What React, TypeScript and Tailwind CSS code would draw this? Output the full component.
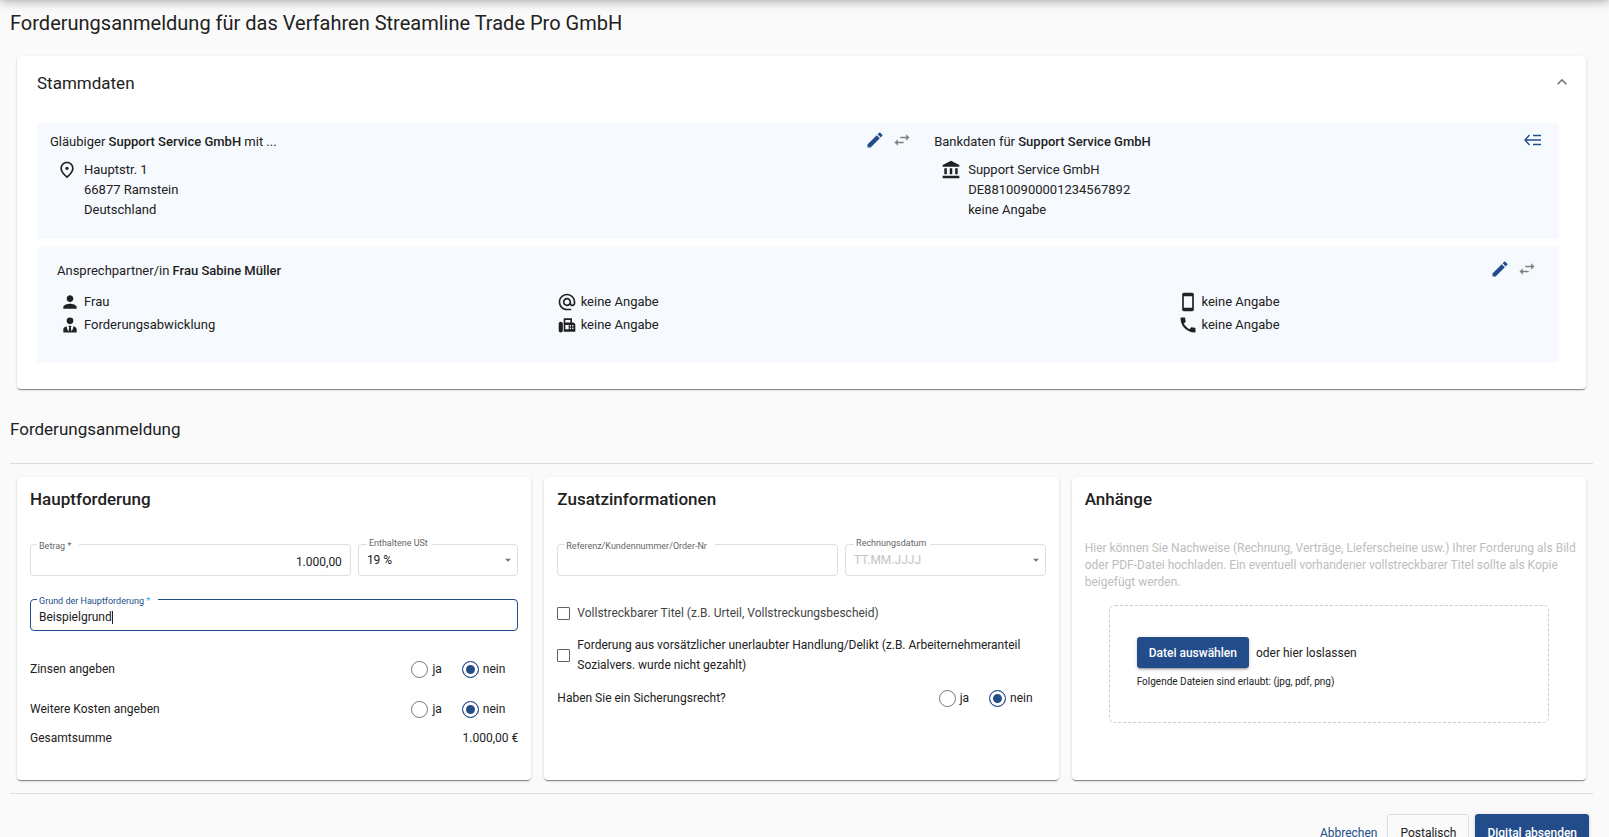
import { ReactNode } from "react";
import {
  MdAccountBalance,
  MdAlternateEmail,
  MdArrowDropDown,
  MdCall,
  MdEdit,
  MdExpandLess,
  MdFax,
  MdOutlinePlace,
  MdPerson,
  MdStayCurrentPortrait,
} from "react-icons/md";

const card =
  "bg-white rounded shadow-[0_2px_1px_-1px_rgba(0,0,0,0.3),0_1px_1px_0_rgba(0,0,0,0.16),0_1px_3px_0_rgba(0,0,0,0.14)]";
const primaryButton =
  "rounded-[3px] bg-[#224d8a] px-3 font-medium text-white shadow-[0_3px_1px_-2px_rgba(0,0,0,0.2),0_2px_2px_0_rgba(0,0,0,0.14),0_1px_5px_0_rgba(0,0,0,0.12)]";

function TieIcon() {
  return (
    <svg viewBox="0 0 24 24" className="size-5" fill="currentColor">
      <path d="M12 3a4 4 0 1 1 0 8 4 4 0 0 1 0-8m4 10.54c0 1.06-.28 3.53-2.19 6.29L13 15l.94-1.88c-.62-.07-1.27-.12-1.94-.12s-1.32.05-1.94.12L11 15l-.81 4.83C8.28 17.07 8 14.6 8 13.54c-2.39.7-4 1.96-4 3.46v4h16v-4c0-1.5-1.6-2.76-4-3.46" />
    </svg>
  );
}

function SwapIcon() {
  return (
    <svg viewBox="0 0 24 24" className="size-5" fill="currentColor">
      <path d="m21 9-4-4v3h-7v2h7v3zM7 11l-4 4 4 4v-3h7v-2H7z" />
    </svg>
  );
}

function MenuOpenIcon() {
  return (
    <svg
      viewBox="0 0 20 20"
      className="size-5"
      fill="none"
      stroke="currentColor"
      strokeWidth="1.4"
    >
      <path d="M10 5.500h8M2 10h16M10 14.500h8M6.500 5 2 10l4.500 5" />
    </svg>
  );
}

function EditActions() {
  return (
    <div className="flex gap-[7px]">
      <button type="button" aria-label="Bearbeiten" className="text-[#224d8a]">
        <MdEdit className="size-5" />
      </button>
      <button type="button" aria-label="Wechseln" className="text-[#808080]">
        <SwapIcon />
      </button>
    </div>
  );
}

function Contact({ icon, children }: { icon: ReactNode; children: ReactNode }) {
  return (
    <li className="flex h-[23px] items-center gap-1">
      {icon}
      <span>{children}</span>
    </li>
  );
}

function YesNo({ name, label }: { name: string; label: string }) {
  const radio =
    "size-[17px] appearance-none rounded-full border border-[#757575] checked:border-[#224d8a] checked:bg-[#224d8a] checked:shadow-[inset_0_0_0_3px_white]";
  return (
    <fieldset className="flex items-center">
      <legend className="float-left flex-1">{label}</legend>
      <label className="flex items-center gap-1">
        <input type="radio" name={name} className={radio} />
        ja
      </label>
      <label className="ml-5 mr-[13px] flex items-center gap-1">
        <input type="radio" name={name} defaultChecked className={radio} />
        nein
      </label>
    </fieldset>
  );
}

function Field({
  id,
  label,
  className,
  active,
  dropdown,
  children,
}: {
  id: string;
  label: ReactNode;
  className?: string;
  active?: boolean;
  dropdown?: boolean;
  children: ReactNode;
}) {
  return (
    <div
      className={`relative flex h-8 items-center rounded border px-2 ${
        active ? "border-[#224d8a]" : "border-[#dedede]"
      } ${className ?? ""}`}
    >
      <label
        htmlFor={id}
        className={`absolute bg-white pl-0.5 text-[9px] leading-3 ${
          dropdown ? "-top-2 left-2 px-1" : "-top-1.5 left-1.5 pr-2 pt-px"
        } ${active ? "text-[#224d8a]" : "text-[#666]"}`}
      >
        {label}
      </label>
      {children}
      {dropdown && (
        <MdArrowDropDown className="pointer-events-none -mr-1.5 size-3.5 shrink-0 text-[#757575]" />
      )}
    </div>
  );
}

function Card({ title, children }: { title: string; children: ReactNode }) {
  return (
    <section className={`${card} px-[13px] pb-8 pt-[11px]`}>
      <h3 className="mb-[30px] text-[17px] font-medium leading-[22px]">{title}</h3>
      {children}
    </section>
  );
}

export default function App() {
  return (
    <div className="h-screen overflow-hidden bg-[#fafafa] font-['Roboto',sans-serif] text-[13px] leading-5 text-[#212121]">
      <header className="-mt-16 h-16 shadow-[0_1px_10px_0_rgba(0,0,0,0.36)]" />
      <main className="pl-2.5 pr-4 pt-[11px]">
        <h1 className="text-xl leading-6">
          Forderungsanmeldung für das Verfahren Streamline Trade Pro GmbH
        </h1>

        <section className={`${card} mx-[7px] mt-[21px] px-5 pb-[26px] pt-4`}>
          <div className="flex items-start justify-between">
            <h2 className="text-[17px] leading-[22px]">Stammdaten</h2>
            <button type="button" aria-label="Einklappen" className="-mr-1.5 text-[#757575]">
              <MdExpandLess className="size-5" />
            </button>
          </div>

          <div className="mr-[7px] mt-[29px] grid grid-cols-[7fr_5fr] rounded bg-[#f6f9fe] px-1 pb-[19px] pt-[7px]">
            <div className="pl-[9px] pr-3">
              <div className="flex h-6 items-start justify-between">
                <p className="leading-6">
                  Gläubiger <b className="font-medium">Support Service GmbH</b> mit ...
                </p>
                <EditActions />
              </div>
              <div className="mt-1.5 flex gap-[7px] pl-[7px]">
                <MdOutlinePlace className="size-5" />
                <address className="not-italic">
                  Hauptstr. 1<br />
                  66877 Ramstein
                  <br />
                  Deutschland
                </address>
              </div>
            </div>
            <div className="pl-2.5 pr-3">
              <div className="flex h-6 items-start justify-between">
                <p className="leading-6">
                  Bankdaten für <b className="font-medium">Support Service GmbH</b>
                </p>
                <button type="button" aria-label="Menü" className="text-[#224d8a]">
                  <MenuOpenIcon />
                </button>
              </div>
              <div className="mt-1.5 flex gap-[7px] pl-[7px]">
                <MdAccountBalance className="size-5" />
                <p>
                  Support Service GmbH
                  <br />
                  DE88100900001234567892
                  <br />
                  keine Angabe
                </p>
              </div>
            </div>
          </div>

          <div className="mr-[7px] mt-[7px] rounded bg-[#f6f9fe] px-4 pb-[27px] pt-[13px]">
            <div className="flex h-6 items-start justify-between pl-1 pr-1.5">
              <p className="leading-6">
                Ansprechpartner/in <b className="font-medium">Frau Sabine Müller</b>
              </p>
              <EditActions />
            </div>
            <div className="mt-[7px] grid grid-cols-[4fr_5fr_3fr]">
              <ul className="pl-[7px]">
                <Contact icon={<MdPerson className="size-5" />}>Frau</Contact>
                <Contact icon={<TieIcon />}>Forderungsabwicklung</Contact>
              </ul>
              <ul className="pl-[7px]">
                <Contact icon={<MdAlternateEmail className="size-5" />}>keine Angabe</Contact>
                <Contact icon={<MdFax className="size-5" />}>keine Angabe</Contact>
              </ul>
              <ul className="pl-[7px]">
                <Contact icon={<MdStayCurrentPortrait className="size-5" />}>
                  keine Angabe
                </Contact>
                <Contact icon={<MdCall className="size-5" />}>keine Angabe</Contact>
              </ul>
            </div>
          </div>
        </section>

        <h2 className="mt-7 text-[17px] leading-6">Forderungsanmeldung</h2>

        <div className="mt-[22px] grid grid-cols-3 gap-[13px] border-y border-[#dcdcdc] px-[7px] py-[13px] text-xs leading-5">
          <Card title="Hauptforderung">
            <div className="mt-[34px] grid grid-cols-[2fr_1fr] gap-[7px]">
              <Field id="betrag" label="Betrag *">
                <input
                  id="betrag"
                  defaultValue="1.000,00"
                  className="w-full pt-1 text-right outline-none"
                />
              </Field>
              <Field id="ust" label="Enthaltene USt" dropdown>
                <select id="ust" className="w-full appearance-none outline-none">
                  <option>19 %</option>
                </select>
              </Field>
            </div>
            <Field
              id="grund"
              label={
                <>
                  Grund der Hauptforderung <span className="text-[#2fa4f5]">*</span>
                </>
              }
              className="mt-[23px]"
              active
            >
              <input
                id="grund"
                defaultValue="Beispielgrund"
                className="field-sizing-content pt-1 outline-none"
              />
              <span className="mt-1 h-[13px] w-px bg-[#212121]" />
            </Field>
            <div className="mt-7">
              <YesNo name="zinsen" label="Zinsen angeben" />
            </div>
            <div className="mt-5">
              <YesNo name="kosten" label="Weitere Kosten angeben" />
            </div>
            <p className="mt-[9px] flex justify-between">
              <span>Gesamtsumme</span>
              <span>1.000,00 €</span>
            </p>
          </Card>

          <Card title="Zusatzinformationen">
            <div className="mt-[34px] grid grid-cols-[7fr_5fr] gap-[7px]">
              <Field id="referenz" label="Referenz/Kundennummer/Order-Nr">
                <input id="referenz" className="w-full pt-1 outline-none" />
              </Field>
              <Field id="datum" label="Rechnungsdatum" dropdown>
                <input
                  id="datum"
                  placeholder="TT.MM.JJJJ"
                  className="w-full outline-none placeholder:text-[#c4c4c4]"
                />
              </Field>
            </div>
            <label className="mt-[27px] flex items-center gap-[7px] text-[#444]">
              <input
                type="checkbox"
                className="size-[13px] shrink-0 appearance-none rounded-[1px] border border-[#616161]"
              />
              Vollstreckbarer Titel (z.B. Urteil, Vollstreckungsbescheid)
            </label>
            <label className="mt-3 flex items-center gap-[7px]">
              <input
                type="checkbox"
                className="size-[13px] shrink-0 appearance-none rounded-[1px] border border-[#616161]"
              />
              Forderung aus vorsätzlicher unerlaubter Handlung/Delikt (z.B. Arbeiternehmeranteil
              Sozialvers. wurde nicht gezahlt)
            </label>
            <div className="mt-[13px]">
              <YesNo name="recht" label="Haben Sie ein Sicherungsrecht?" />
            </div>
          </Card>

          <Card title="Anhänge">
            <p className="-mr-2.5 leading-[17px] text-[#bdbdbd]">
              Hier können Sie Nachweise (Rechnung, Verträge, Lieferscheine usw.) Ihrer Forderung als
              Bild oder PDF-Datei hochladen. Ein eventuell vorhandener vollstreckbarer Titel sollte
              als Kopie beigefügt werden.
            </p>
            <div className="mx-6 mt-3.5 rounded-md border border-dashed border-[#ccc] px-[27px] pb-8 pt-[31px]">
              <div className="flex items-center gap-[7px]">
                <button type="button" className={`${primaryButton} h-[31px]`}>
                  Datei auswählen
                </button>
                <span>oder hier loslassen</span>
              </div>
              <p className="mt-1.5 text-[10px] leading-4">
                Folgende Dateien sind erlaubt: (jpg, pdf, png)
              </p>
            </div>
          </Card>
        </div>

        <div className="mt-5 flex justify-end gap-1.5 pr-1 text-xs">
          <button type="button" className="h-[37px] px-1 text-[#224d8a]">
            Abbrechen
          </button>
          <button type="button" className="h-[37px] rounded-[3px] border border-[#dcdcdc] px-3">
            Postalisch
          </button>
          <button type="button" className={`${primaryButton} h-[37px]`}>
            Digital absenden
          </button>
        </div>
      </main>
    </div>
  );
}
